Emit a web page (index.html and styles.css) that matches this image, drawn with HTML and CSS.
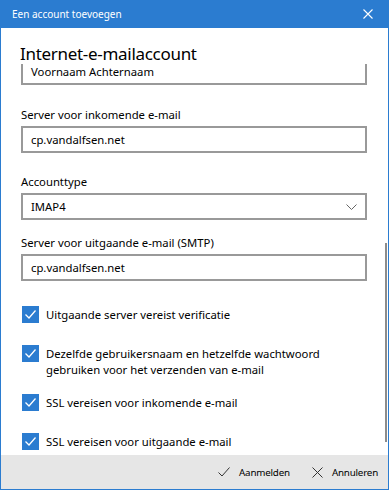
FILE: index.html
```html
<!DOCTYPE html>
<html lang="nl">

<head>
  <meta charset="UTF-8">
  <meta name="viewport" content="width=device-width, initial-scale=1.0">
  <title>Een account toevoegen</title>
  <link rel="stylesheet" href="styles.css">
</head>

<body>
  <div class="window">
    <div class="titlebar">
      <span class="title">Een account toevoegen</span>
      <svg class="close" width="10" height="10" viewBox="0 0 10 10">
        <path d="M0.5 0.5 L9.5 9.5 M9.5 0.5 L0.5 9.5" stroke="#fff" stroke-width="1.1" fill="none" />
      </svg>
    </div>

    <h1 class="heading">Internet-e-mailaccount</h1>

    <div class="scroll">
      <div class="content">
        <!-- name field, scrolled half out of view -->
        <div class="field">Voornaam Achternaam</div>

        <div class="group group-in">
          <label class="label">Server voor inkomende e-mail</label>
          <div class="field">cp.vandalfsen.net</div>
        </div>

        <div class="group group-type">
          <label class="label">Accounttype</label>
          <div class="field select">
            <span>IMAP4</span>
            <svg width="11" height="6" viewBox="0 0 11 6">
              <path d="M0.5 0.5 L5.5 5.5 L10.5 0.5" stroke="#666" stroke-width="1" fill="none" />
            </svg>
          </div>
        </div>

        <div class="group group-out">
          <label class="label">Server voor uitgaande e-mail (SMTP)</label>
          <div class="field">cp.vandalfsen.net</div>
        </div>

        <div class="checks">
          <div class="check-row">
            <span class="box"><svg width="17" height="17" viewBox="0 0 17 17"><path d="M3.5 8.5 L7 12 L13.5 4.5" stroke="#fff" stroke-width="1.3" fill="none" /></svg></span>
            <span class="check-text">Uitgaande server vereist verificatie</span>
          </div>
          <div class="check-row">
            <span class="box"><svg width="17" height="17" viewBox="0 0 17 17"><path d="M3.5 8.5 L7 12 L13.5 4.5" stroke="#fff" stroke-width="1.3" fill="none" /></svg></span>
            <span class="check-text">Dezelfde gebruikersnaam en hetzelfde wachtwoord<br>gebruiken voor het verzenden van e-mail</span>
          </div>
          <div class="check-row">
            <span class="box"><svg width="17" height="17" viewBox="0 0 17 17"><path d="M3.5 8.5 L7 12 L13.5 4.5" stroke="#fff" stroke-width="1.3" fill="none" /></svg></span>
            <span class="check-text">SSL vereisen voor inkomende e-mail</span>
          </div>
          <div class="check-row">
            <span class="box"><svg width="17" height="17" viewBox="0 0 17 17"><path d="M3.5 8.5 L7 12 L13.5 4.5" stroke="#fff" stroke-width="1.3" fill="none" /></svg></span>
            <span class="check-text">SSL vereisen voor uitgaande e-mail</span>
          </div>
        </div>
      </div>
      <div class="scrollbar"></div>
    </div>

    <div class="footer">
      <button class="action">
        <svg width="12" height="10" viewBox="0 0 12 10">
          <path d="M0.5 5.5 L4 9 L11.5 0.5" stroke="#333" stroke-width="1" fill="none" />
        </svg>
        Aanmelden
      </button>
      <button class="action">
        <svg width="11" height="11" viewBox="0 0 11 11">
          <path d="M0.5 0.5 L10.5 10.5 M10.5 0.5 L0.5 10.5" stroke="#333" stroke-width="1" fill="none" />
        </svg>
        Annuleren
      </button>
    </div>
  </div>
</body>

</html>
```

FILE: styles.css
```css
body {
  margin: 0;
  font-family: "Noto Sans", "Open Sans", sans-serif;
  font-size: 11.3px;
  color: #000;
  background: #fff;
}

.window {
  width: 389px;
  height: 490px;
  box-sizing: border-box;
  border: 1px solid #2b7cd0;
  border-top: none;
  display: flex;
  flex-direction: column;
  overflow: hidden;
}

.titlebar {
  height: 28px;
  margin: 0 -1px;
  background-color: #2b7cd0;
  color: white;
  display: flex;
  align-items: center;
  justify-content: space-between;
  padding: 0 16px 0 12px;
  flex-shrink: 0;
}

.title {
  font-size: 10px;
}

.heading {
  margin: 0;
  height: 36px;
  padding: 16px 0 0 19px;
  box-sizing: border-box;
  font-size: 17px;
  font-weight: normal;
  letter-spacing: -0.3px;
  line-height: 20px;
  flex-shrink: 0;
}

.scroll {
  flex: 1;
  position: relative;
  overflow: hidden;
}

.content {
  margin-top: -6px;
  padding: 0 21px 0 20px;
}

.field {
  height: 27px;
  box-sizing: border-box;
  border: 2px solid #999;
  padding: 0 8px;
  display: flex;
  align-items: center;
  line-height: 16px;
}

.select {
  justify-content: space-between;
  padding-right: 8px;
}

.label {
  display: block;
  line-height: 16px;
  margin-bottom: 3px;
}

.group-in {
  margin-top: 22px;
}

.group-type {
  margin-top: 21px;
}

.group-out {
  margin-top: 15px;
}

.checks {
  margin-top: 25px;
}

.check-row {
  display: flex;
  align-items: flex-start;
  min-height: 39px;
  padding-bottom: 16px;
  box-sizing: border-box;
}

.box {
  width: 17px;
  height: 17px;
  background-color: #2b7cd0;
  flex-shrink: 0;
  margin-left: 1px;
}

.box svg {
  display: block;
}

.check-text {
  margin-left: 7px;
  line-height: 16px;
  padding-top: 1px;
}

.scrollbar {
  position: absolute;
  right: 1px;
  top: 179px;
  width: 2px;
  height: 199px;
  background-color: #8c8c8c;
}

.footer {
  height: 34px;
  flex-shrink: 0;
  background-color: #e6e6e6;
  display: flex;
  justify-content: flex-end;
  align-items: center;
  gap: 22px;
  padding-right: 10px;
}

.action {
  background: none;
  border: none;
  padding: 0;
  font-family: inherit;
  font-size: 9.8px;
  letter-spacing: -0.2px;
  color: #000;
  display: flex;
  align-items: center;
  gap: 9px;
}
```
